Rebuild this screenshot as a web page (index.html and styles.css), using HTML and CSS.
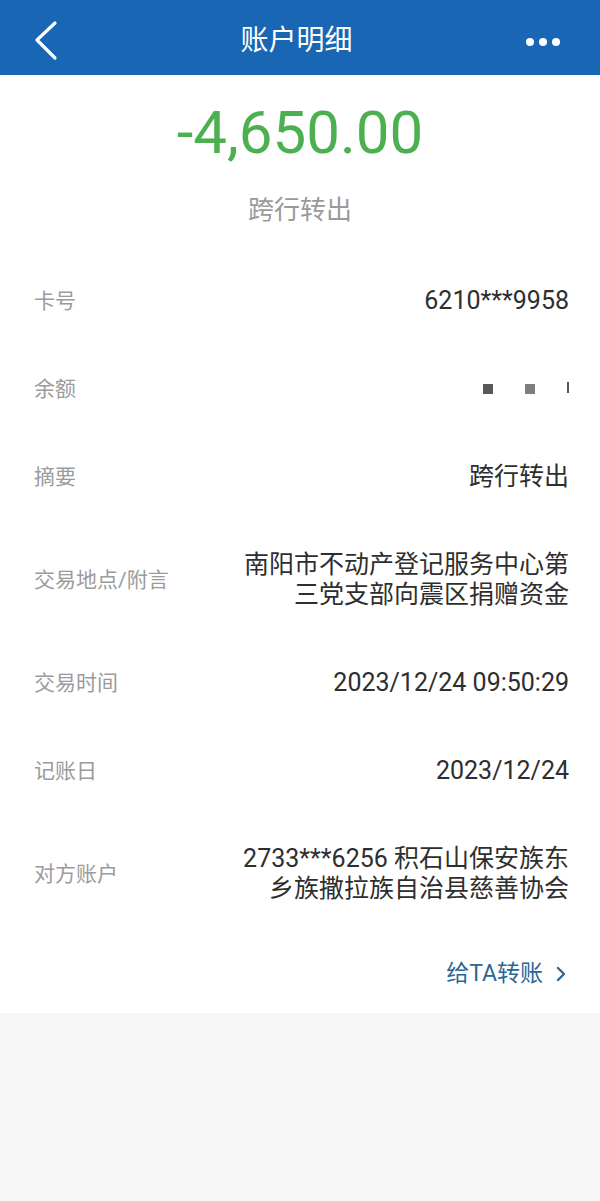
FILE: index.html
```html
<!DOCTYPE html>
<html lang="zh-CN">
<head>
    <meta charset="UTF-8">
    <meta name="viewport" content="width=device-width, initial-scale=1.0">
    <title>账户明细</title>
    <link rel="stylesheet" href="styles.css">
</head>
<body>
    <header class="topbar">
        <span class="back">
            <svg width="26" height="42" viewBox="0 0 26 42">
                <polyline points="22,3 4,20 22,38" fill="none" stroke="#fff" stroke-width="3.2" stroke-linecap="round" stroke-linejoin="round"/>
            </svg>
        </span>
        <h1>账户明细</h1>
        <span class="more"><i></i><i></i><i></i></span>
    </header>

    <section class="summary">
        <div class="amount">-4,650.00</div>
        <div class="kind">跨行转出</div>
    </section>

    <section class="details">
        <div class="row">
            <span class="label">卡号</span>
            <span class="value">6210***9958</span>
        </div>
        <div class="row">
            <span class="label">余额</span>
            <span class="value masked"><i class="dark"></i><i class="mid"></i><i class="tick"></i></span>
        </div>
        <div class="row">
            <span class="label">摘要</span>
            <span class="value">跨行转出</span>
        </div>
        <div class="row">
            <span class="label">交易地点/附言</span>
            <span class="value">南阳市不动产登记服务中心第<br>三党支部向震区捐赠资金</span>
        </div>
        <div class="row">
            <span class="label">交易时间</span>
            <span class="value">2023/12/24 09:50:29</span>
        </div>
        <div class="row">
            <span class="label">记账日</span>
            <span class="value">2023/12/24</span>
        </div>
        <div class="row">
            <span class="label">对方账户</span>
            <span class="value">2733***6256 积石山保安族东<br>乡族撒拉族自治县慈善协会</span>
        </div>
        <div class="action">
            <a href="#" class="transfer">给TA转账
                <svg width="12" height="16" viewBox="0 0 12 16">
                    <polyline points="3,2 9,8 3,14" fill="none" stroke="#2a6796" stroke-width="2.4" stroke-linecap="round" stroke-linejoin="round"/>
                </svg>
            </a>
        </div>
    </section>
</body>
</html>
```

FILE: styles.css
```css
body {
    margin: 0;
    font-family: Roboto, "Noto Sans CJK SC", sans-serif;
    background: #f7f7f7;
    color: #333;
}

.topbar {
    height: 75px;
    background: #1866b4;
    display: grid;
    grid-template-columns: 1fr auto 1fr;
    align-items: center;
    padding: 0 40px 0 33px;
}

.topbar h1 {
    margin: 0;
    font-size: 28px;
    font-weight: normal;
    line-height: 36px;
    color: #fff;
    padding-top: 6px;
}

.back {
    display: flex;
    margin-top: 6px;
}

.more {
    display: flex;
    justify-content: flex-end;
    gap: 5px;
    margin-top: 8px;
}

.more i {
    width: 8px;
    height: 8px;
    border-radius: 50%;
    background: #fff;
}

.summary {
    background: #fff;
    text-align: center;
    padding: 22px 0 32px;
}

.amount {
    font-size: 60px;
    line-height: 72px;
    color: #4cb050;
}

.kind {
    margin-top: 26px;
    font-size: 26px;
    line-height: 30px;
    color: #9a9a9a;
}

.details {
    background: #fff;
}

.row {
    display: flex;
    align-items: center;
    justify-content: space-between;
    padding: 29px 31px 29px 34px;
}

.label {
    font-size: 21px;
    line-height: 30px;
    color: #9b9b9b;
}

.value {
    font-size: 25px;
    line-height: 30px;
    text-align: right;
    color: #2e2e2e;
}

.masked {
    display: flex;
    align-items: center;
    height: 30px;
}

.masked i {
    width: 10px;
    height: 10px;
    margin-left: 32px;
}

.masked .dark {
    background: #585858;
}

.masked .mid {
    background: #7e7e7e;
}

.masked .tick {
    width: 2px;
    height: 11px;
    background: #555;
    margin-left: 32px;
    margin-top: -4px;
}

.action {
    display: flex;
    justify-content: flex-end;
    padding: 26px 33px 24px;
}

.transfer {
    display: flex;
    align-items: center;
    gap: 12px;
    font-size: 23px;
    line-height: 30px;
    color: #2a6796;
    text-decoration: none;
}
```
